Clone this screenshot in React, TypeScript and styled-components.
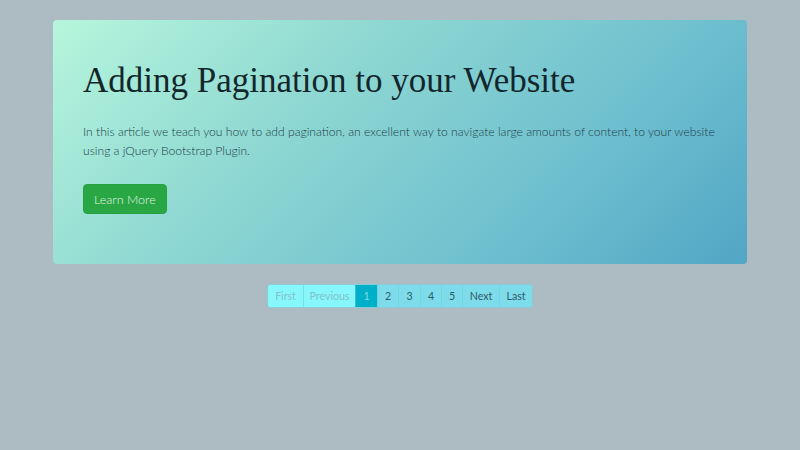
import styled, { createGlobalStyle } from "styled-components";

const Global = createGlobalStyle`
  html, body {
    margin: 0;
    padding: 0;
    background: #adbbc2;
  }
  * { box-sizing: border-box; }
`;

const Page = styled.div`
  width: 800px;
  min-height: 450px;
  padding: 20px 53px;
  font-family: "Lato", "Liberation Sans", sans-serif;
`;

const Jumbotron = styled.section`
  height: 244px;
  border-radius: 4px;
  padding: 39px 30px 0;
  background: linear-gradient(135deg, #b6f6dc 0%, #8fd8d2 35%, #6fc0cf 70%, #52a6c5 100%);
`;

const Title = styled.h1`
  margin: 0;
  font-family: "Liberation Serif", "Times New Roman", serif;
  font-weight: 400;
  font-size: 35px;
  line-height: 44px;
  color: #13262c;
`;

const Lead = styled.p`
  margin: 19px 0 0;
  font-size: 12.1px;
  font-weight: 300;
  line-height: 19px;
  color: #213f4a;
`;

const Button = styled.a`
  display: inline-flex;
  align-items: center;
  margin-top: 24px;
  height: 30px;
  padding: 0 10px;
  border-radius: 4px;
  background: #29a745;
  border: 1px solid #26a142;
  color: #e4f6e8;
  font-size: 12.5px;
  font-weight: 300;
  text-decoration: none;
`;

const Pager = styled.nav`
  display: flex;
  justify-content: center;
  margin-top: 20px;
`;

const List = styled.ul`
  display: flex;
  list-style: none;
  margin: 0;
  padding: 0;
  border-radius: 3px;
  overflow: hidden;
  border: 1px solid rgba(110, 215, 228, 0.6);
`;

type State = "disabled" | "active" | "normal";

const Item = styled.li<{ $state: State; $w: number }>`
  height: 22px;
  width: ${(p) => p.$w}px;
  display: flex;
  align-items: center;
  justify-content: center;
  font-size: 10.6px;
  font-weight: 400;
  border-left: 1px solid rgba(100, 205, 220, 0.55);
  &:first-child { border-left: none; }
  background: ${(p) =>
    p.$state === "disabled" ? "#88f7fc" : p.$state === "active" ? "#00afc8" : "#7edcea"};
  color: ${(p) =>
    p.$state === "disabled" ? "#7fc2cb" : p.$state === "active" ? "#86d9e6" : "#2b5b68"};
`;

const pages: { label: string; state: State; w: number }[] = [
  { label: "First", state: "disabled", w: 35 },
  { label: "Previous", state: "disabled", w: 52 },
  { label: "1", state: "active", w: 22 },
  { label: "2", state: "normal", w: 21 },
  { label: "3", state: "normal", w: 22 },
  { label: "4", state: "normal", w: 21 },
  { label: "5", state: "normal", w: 21 },
  { label: "Next", state: "normal", w: 37 },
  { label: "Last", state: "normal", w: 33 },
];

export default function App() {
  return (
    <>
      <Global />
      <Page>
        <Jumbotron>
          <Title>Adding Pagination to your Website</Title>
          <Lead>
            In this article we teach you how to add pagination, an excellent way to navigate
            large amounts of content, to your website using a jQuery Bootstrap Plugin.
          </Lead>
          <Button href="#">Learn More</Button>
        </Jumbotron>
        <Pager>
          <List>
            {pages.map((p) => (
              <Item key={p.label} $state={p.state} $w={p.w}>
                {p.label}
              </Item>
            ))}
          </List>
        </Pager>
      </Page>
    </>
  );
}
